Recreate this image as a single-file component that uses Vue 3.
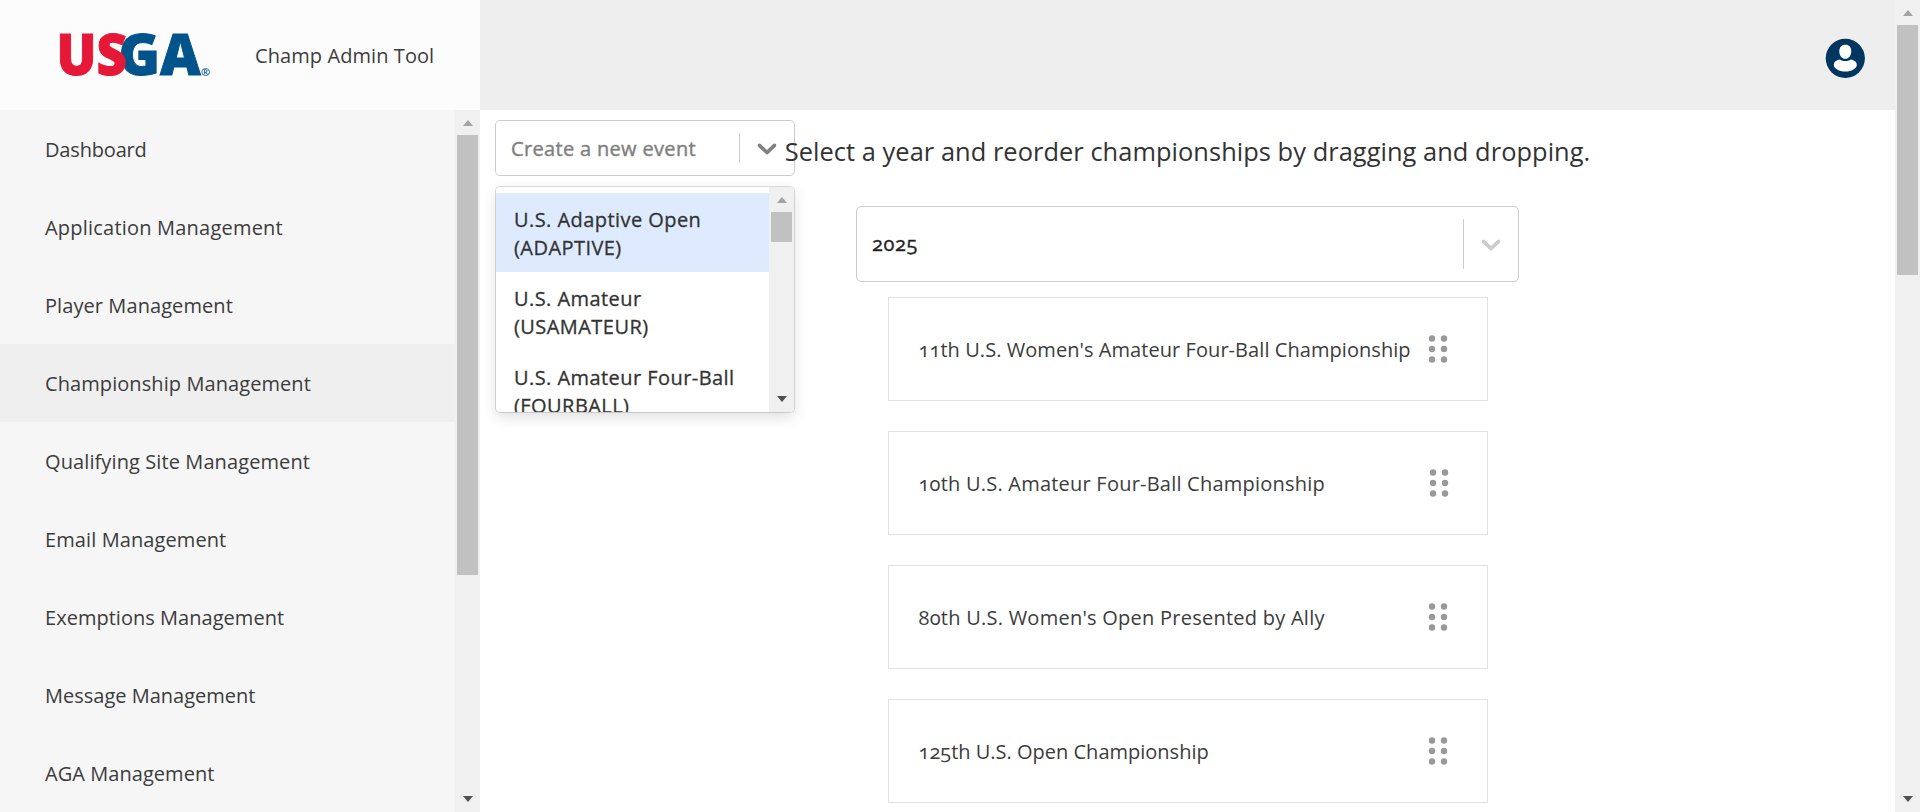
<script setup>
const nav = [
  { label: 'Dashboard', track: -0.17 },
  { label: 'Application Management', track: 0.21 },
  { label: 'Player Management', track: 0.08 },
  { label: 'Championship Management', track: 0.08, active: true },
  { label: 'Qualifying Site Management', track: 0.1 },
  { label: 'Email Management', track: 0.1 },
  { label: 'Exemptions Management', track: 0.03 },
  { label: 'Message Management', track: 0 },
  { label: 'AGA Management', track: 0.05 },
]
const events = [
  { name: 'U.S. Adaptive Open', code: '(ADAPTIVE)', focused: true },
  { name: 'U.S. Amateur', code: '(USAMATEUR)' },
  { name: 'U.S. Amateur Four-Ball', code: '(FOURBALL)' },
]
const championships = [
  { title: "11th U.S. Women's Amateur Four-Ball Championship", track: 0.06 },
  { title: '10th U.S. Amateur Four-Ball Championship', track: 0.22, shift: true },
  { title: "80th U.S. Women's Open Presented by Ally", track: 0.25 },
  { title: '125th U.S. Open Championship', track: 0 },
]
const chevron =
  'M4.516 7.548c0.436-0.446 1.043-0.481 1.576 0l3.908 3.747 3.908-3.747c0.533-0.481 1.141-0.446 1.574 0 0.436 0.445 0.408 1.197 0 1.615-0.406 0.418-4.695 4.502-4.695 4.502-0.217 0.223-0.502 0.335-0.787 0.335s-0.57-0.112-0.789-0.335c0 0-4.287-4.084-4.695-4.502s-0.436-1.17 0-1.615z'
</script>

<template>
  <div class="page">
    <div class="left">
      <header class="brand">
        <svg class="logo" width="156" height="46" viewBox="0 0 156 46">
          <g font-family="Noto Sans, Open Sans, sans-serif" font-weight="900" font-size="56.500" stroke-width="1">
            <text class="blue" x="58.500" y="41.300" textLength="82" lengthAdjust="spacingAndGlyphs">GA</text>
            <text class="red" x="-3.500" y="41.300" textLength="70.500" lengthAdjust="spacingAndGlyphs">US</text>
          </g>
          <text class="reg" x="141" y="42">®</text>
        </svg>
        <span class="product">Champ Admin Tool</span>
      </header>
      <div class="side">
        <nav class="menu">
          <a v-for="n in nav" :key="n.label" class="item" :class="{ active: n.active }"
             :style="{ letterSpacing: n.track + 'px' }">{{ n.label }}</a>
        </nav>
        <div class="bar"><i class="up"></i><b class="thumb side-thumb"></b><i class="down"></i></div>
      </div>
    </div>

    <div class="main">
      <header class="top">
        <svg class="user" width="40" height="40" viewBox="0 0 40 40">
          <circle cx="20.300" cy="20.300" r="19.600" fill="#00365f" />
          <path d="M20.300 6.800c4 0 6 2.700 6 6.600s-2.600 7.400-6 7.400-6-3.500-6-7.400 2-6.600 6-6.600z" fill="#fff" />
          <path d="M14.800 21.500c1.700 1.100 3.500 1.500 5.500 1.500s3.800-.4 5.500-1.500c3.500.6 6 2.500 6 5.200 0 3.800-5.200 6.800-11.500 6.800S8.800 30.500 8.800 26.700c0-2.700 2.500-4.600 6-5.200z" fill="#fff" />
        </svg>
      </header>
      <section class="content">
        <h1 class="heading">Select a year and reorder championships by dragging and dropping.</h1>
        <div class="select year">
          <span class="value">2025</span>
          <span class="sep"></span>
          <svg class="chev" width="32" height="32" viewBox="0 0 20 20"><path :d="chevron" /></svg>
        </div>
        <ul class="cards">
          <li v-for="c in championships" :key="c.title" class="card">
            <span :style="{ letterSpacing: c.track + 'px' }">{{ c.title }}</span>
            <svg class="grip" :class="{ nudged: c.shift }" width="20" height="30" viewBox="0 0 20 30">
              <g v-for="y in [4.500, 15, 25.500]" :key="y">
                <circle cx="4" :cy="y" r="3.200" /><circle cx="16" :cy="y" r="3.200" />
              </g>
            </svg>
          </li>
        </ul>

        <div class="picker">
          <div class="select create">
            <span class="placeholder">Create a new event</span>
            <span class="sep"></span>
            <svg class="chev" width="32" height="32" viewBox="0 0 20 20"><path :d="chevron" /></svg>
          </div>
          <div class="dropdown">
            <div class="options">
              <div v-for="e in events" :key="e.code" class="option" :class="{ focused: e.focused }">
                <div>{{ e.name }}</div>
                <div>{{ e.code }}</div>
              </div>
            </div>
            <div class="bar"><i class="up"></i><b class="thumb drop-thumb"></b><i class="down"></i></div>
          </div>
        </div>
      </section>
    </div>

    <div class="bar"><i class="up"></i><b class="thumb page-thumb"></b><i class="down"></i></div>
  </div>
</template>

<style>
html, body { margin: 0; overflow: hidden; background: #fff; }
</style>

<style scoped>
* { box-sizing: border-box; }
.page {
  display: flex; width: 1920px; height: 812px; overflow: hidden;
  font-family: "Open Sans", "Noto Sans", sans-serif; font-size: 20px; line-height: 28px; font-weight: 400;
  color: #3c3c3c; font-variant-numeric: oldstyle-nums; background: #fff;
}
.left { width: 480px; display: flex; flex-direction: column; }
.brand { height: 110px; background: #fcfcfc; display: flex; align-items: flex-start; padding: 34px 0 0 60px; }
.logo { display: block; flex: none; overflow: visible; }
.red { fill: #e51937; stroke: #e51937; }
.blue { fill: #00538b; stroke: #00538b; }
.reg { fill: #00538b; font: 600 11px "Noto Sans", sans-serif; }
.product { margin-left: 39px; padding-top: 8px; letter-spacing: .08px; white-space: nowrap; }
.side { flex: 1; display: flex; min-height: 0; }
.menu { flex: 1; background: #f6f6f6; overflow: hidden; }
.item { display: flex; align-items: center; height: 78px; padding: 2px 0 0 45px; }
.item.active { background: #efefef; }

.bar { width: 25px; flex: none; background: #f0f0f0; display: flex; flex-direction: column; align-items: center; }
.up, .down { width: 0; height: 0; border: 5.500px solid transparent; flex: none; }
.up { border-top: 0; border-bottom: 6px solid #a3a3a3; margin: 10px 0 9px; }
.down { border-bottom: 0; border-top: 6px solid #505050; margin: auto 0 10px; }
.thumb { width: 21px; background: #c1c1c1; }
.side-thumb { height: 440px; }
.page-thumb { height: 250px; }
.drop-thumb { height: 30px; }

.main { flex: 1; display: flex; flex-direction: column; min-width: 0; }
.top { height: 110px; background: #eee; display: flex; justify-content: flex-end; align-items: flex-start; padding: 38px 30px 0 0; }
.content { position: relative; flex: 1; min-height: 0; display: flex; flex-direction: column; align-items: center; }
.heading {
  position: relative; z-index: 2; margin: 21px 0 0; height: 75px; line-height: 40px;
  font-size: 25.400px; font-weight: 400; letter-spacing: .055px; white-space: nowrap; color: #333;
}
.select { display: flex; align-items: center; border: 1px solid #ccc; border-radius: 5px; background: #fff; }
.year { width: 663px; height: 76px; flex: none; padding-left: 15px; color: #222; }
.value { flex: 1; letter-spacing: .6px; -webkit-text-stroke: .3px #222; }
.sep { width: 1px; background: #ccc; align-self: stretch; margin: 12px 11px; }
.chev { fill: #ccc; flex: none; margin-right: 11px; }
.cards { list-style: none; margin: 15px 0 0; padding: 0; width: 600px; display: flex; flex-direction: column; gap: 30px; }
.card { height: 104px; flex: none; border: 1px solid #e1e1e1; display: flex; align-items: center; justify-content: space-between; padding: 0 39px 0 30px; }
.card span { padding-top: 2px; white-space: nowrap; }
.grip { fill: #999; }
.grip.nudged { margin-right: -1px; }

.picker { position: absolute; left: 15px; top: 10px; width: 300px; }
.create { height: 56px; padding-left: 15px; letter-spacing: .33px; }
.create .chev { fill: #808080; }
.placeholder { flex: 1; padding-top: 2px; color: #808080; -webkit-text-stroke: .4px #808080; }
.dropdown {
  margin: 11px 1px 0; height: 225px; display: flex; overflow: hidden; border-radius: 4px; background: #fff;
  box-shadow: 0 0 0 1px rgba(0,0,0,.13), 0 5px 14px rgba(0,0,0,.13);
}
.options { flex: 1; padding-top: 6px; }
.option { height: 79px; padding: 13px 0 0 18px; letter-spacing: .44px; color: #333; -webkit-text-stroke: .3px #333; }
.option.focused { background: #deebff; }
</style>
